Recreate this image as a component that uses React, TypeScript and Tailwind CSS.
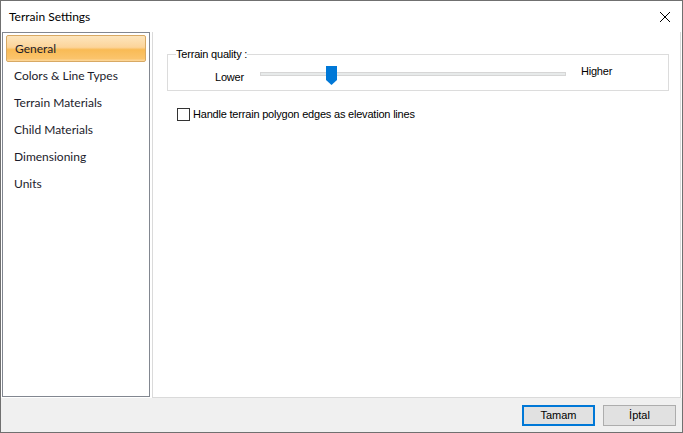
import React from "react";

const menuItems = ["General", "Colors & Line Types", "Terrain Materials", "Child Materials", "Dimensioning", "Units"];

export default function App() {
    const selected = "General";

    return (
        <div className="w-[683px] h-[433px] border border-[#707070] bg-[#f0f0f0] flex flex-col text-[#1b1b2b]">
            {/* Title bar */}
            <div className="h-[31px] bg-white flex items-center justify-between pl-[8px] pr-[10px]">
                <span className="text-[12px] font-['Lato',sans-serif] text-black">Terrain Settings</span>
                <svg width="12" height="12" viewBox="0 0 12 12" className="mr-[1px]">
                    <path d="M1 1 L11 11 M11 1 L1 11" stroke="#000" strokeWidth="1" fill="none" />
                </svg>
            </div>

            <div className="flex flex-row bg-white">
                {/* Left menu */}
                <div className="ml-[1px] w-[148px] h-[365px] border border-[#828790] bg-white px-[3px] pt-[2px] flex flex-col font-['Lato',sans-serif] text-[12px]">
                    {menuItems.map((item) =>
                        item === selected ? (
                            <div
                                key={item}
                                className="h-[27px] flex items-center pl-[8px] border border-[#d8a964] rounded-[2px] bg-[linear-gradient(to_bottom,#fde5bd_0%,#fcd49a_45%,#f9bb55_55%,#fbc46c_90%,#fdd99e_100%)]"
                            >
                                {item}
                            </div>
                        ) : (
                            <div key={item} className="h-[27px] flex items-center pl-[8px]">
                                {item}
                            </div>
                        )
                    )}
                </div>

                {/* Right content */}
                <div className="ml-[2px] w-[529px] h-[366px] border-l border-b border-r border-[#dadada] bg-white font-['Liberation_Sans',Arial,sans-serif] text-[11px] tracking-[-0.2px] text-black">
                    <div className="relative mt-[22px] ml-[14px] w-[502px] h-[37px] border border-[#dcdcdc] flex flex-row">
                        <span className="absolute -top-[8px] left-[8px] bg-white leading-[14px]">Terrain quality :</span>
                        <span className="ml-[47px] mt-[15px] leading-[14px]">Lower</span>
                        <div className="relative ml-[16px] mt-[17px] w-[306px] h-[4px] bg-[#e7eaea] border border-[#d6d6d6]">
                            <svg width="11" height="19" viewBox="0 0 11 19" className="absolute left-[65px] -top-[7px]">
                                <path d="M0 0 H11 V14 L5.5 19 L0 14 Z" fill="#0078d7" />
                            </svg>
                        </div>
                        <span className="ml-[15px] mt-[9px] leading-[14px]">Higher</span>
                    </div>

                    <label className="flex flex-row items-center mt-[15px] ml-[24px]">
                        <span className="w-[13px] h-[13px] border border-[#333] bg-white"></span>
                        <span className="ml-[3px]">Handle terrain polygon edges as elevation lines</span>
                    </label>
                </div>
            </div>

            {/* Footer */}
            <div className="flex-1 flex flex-row justify-end items-start pt-[7px] pr-[6px] gap-[8px] font-['Liberation_Sans',Arial,sans-serif] text-[11px] text-black">
                <button className="w-[73px] h-[21px] bg-[#e1e1e1] border-2 border-[#0078d7]">Tamam</button>
                <button className="w-[73px] h-[21px] bg-[#e1e1e1] border border-[#adadad]">İptal</button>
            </div>
        </div>
    );
}
